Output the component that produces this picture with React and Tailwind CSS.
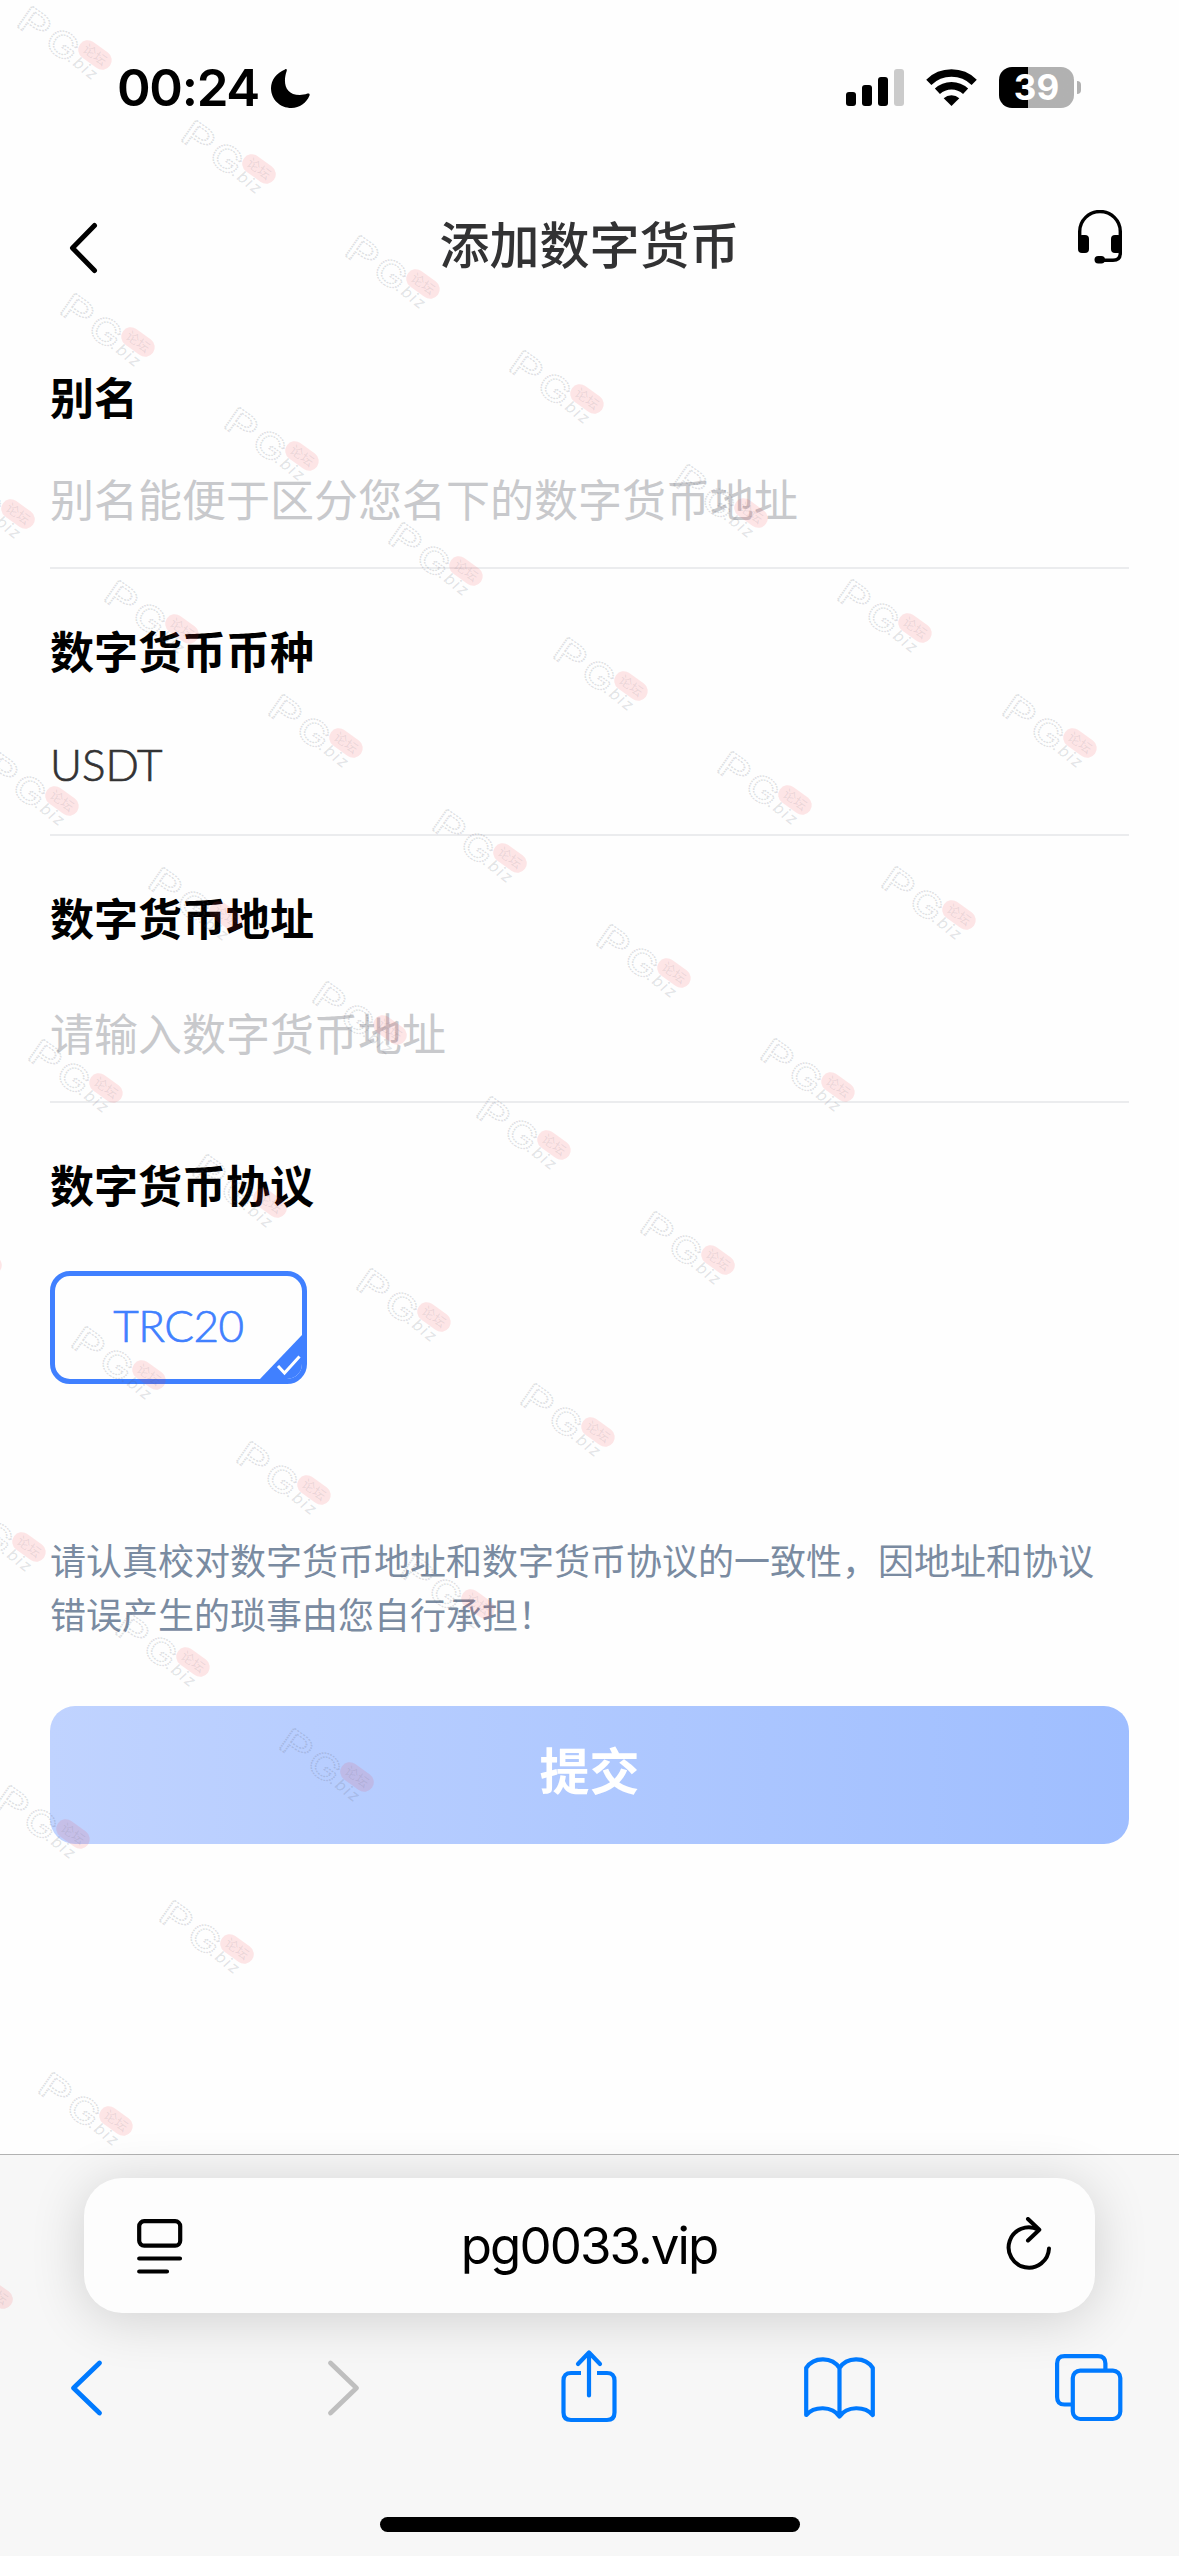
import clsx from 'clsx';

// top-left corner of every watermark stamp, three diagonal families
const stamps = [
  [17, 5], [181, 119], [345, 234], [509, 349], [673, 463], [837, 578], [1002, 693],
  [60, 292], [224, 406], [388, 521], [553, 636], [717, 750], [881, 865],
  [104, 579], [268, 693], [432, 808], [596, 923], [760, 1037],
  [148, 866], [312, 980], [476, 1095], [640, 1210],
  [192, 1153], [356, 1267], [520, 1382],
  [236, 1440], [400, 1554],
  [279, 1727],
  [-60, 464], [-16, 751], [28, 1038], [71, 1325], [115, 1612], [159, 1899],
  [-93, 1210], [-49, 1497], [-5, 1784], [38, 2071],
  [-82, 2244],
];

function Watermark() {
  return (
    <div className="pointer-events-none absolute inset-0 z-20 overflow-hidden">
      {stamps.map(([left, top]) => (
        <svg
          key={`${left}-${top}`}
          className="absolute h-[90px] w-[110px] overflow-visible font-['Inter']"
          style={{ left, top }}
          viewBox="1 2 110 90"
          fill="none"
        >
          <g
            transform="translate(0 23) rotate(35)"
            stroke="#5a5f70"
            strokeOpacity="0.2"
            strokeWidth="1.4"
            strokeDasharray="1.6 0.9"
            fontSize="35"
            fontWeight="500"
          >
            <text x="-2" y="0" textLength="32" lengthAdjust="spacingAndGlyphs">P</text>
            <text x="33" y="1" textLength="32" lengthAdjust="spacingAndGlyphs">G</text>
          </g>
          <text transform="translate(51 58) rotate(38)" fontSize="16" fontStyle="italic" fill="#5a5f70" fillOpacity="0.18" letterSpacing="1.600">.biz</text>
          <g transform="translate(79 52) rotate(36)">
            <rect x="-18.5" y="-9.5" width="37" height="19" rx="9.5" fill="#f5323c" fillOpacity="0.12" />
            <text x="0" y="4.5" textAnchor="middle" fontSize="13" fill="#5a5f70" fillOpacity="0.12" className="font-['Noto_Sans_CJK_SC']">论坛</text>
          </g>
        </svg>
      ))}
    </div>
  );
}

function StatusBar() {
  return (
    <div className="flex h-[176px] items-start pl-[117px] pr-[98px] pt-[67px]">
      <span className="w-[154px] whitespace-nowrap font-['Inter'] text-[51px] font-semibold leading-[42px] tracking-[-1.3px] text-black">00:24</span>
      <svg className="mt-[2px] h-[39px] w-[39px]" viewBox="0 0 39 39">
        <path d="M14 0.4c1.4-.8 2.2.2 1.6 1.8-4 11.5-1.200 23.800 13.200 23.800 2.600 0 5-.300 7.700-1.400 1.500-.600 2.600.300 2 1.900C35.500 34 28.500 39 20.500 39 9 39 0 30.500 0 19 0 11 5.600 3.600 14 .4z" fill="#000" />
      </svg>
      <svg className="ml-auto mt-[2px] h-[38px] w-[58px]" viewBox="0 0 58 38">
        <rect x="0" y="23" width="10" height="14" rx="3" />
        <rect x="16" y="16" width="10" height="21" rx="3" />
        <rect x="32" y="8" width="10" height="29" rx="3" />
        <rect x="48" y="0" width="10" height="37" rx="3" fill="#cbcbcb" />
      </svg>
      <svg className="ml-[22px] mt-[2px] h-[38px] w-[51px]" viewBox="0 0 51 38" fill="none" stroke="#000" strokeWidth="7.400">
        <path d="M2.800 13.300a32.500 32.500 0 0 1 45.400 0" />
        <path d="M11.400 22.300a20.500 20.500 0 0 1 28.200 0" />
        <path d="M25.500 37 17.700 29.200a11.500 11.500 0 0 1 15.600 0z" fill="#000" stroke="none" />
      </svg>
      <div className="ml-[22px] flex items-center">
        <div className="flex h-[41px] w-[75px] items-center justify-center rounded-[13px] bg-linear-to-r from-black from-[39%] to-[#b1b1b1] to-[39%] font-['Inter'] text-[35px] font-bold leading-none text-white">39</div>
        <div className="ml-[3px] h-[13px] w-[4px] rounded-r-full bg-[#b1b1b1]" />
      </div>
    </div>
  );
}

function Header() {
  return (
    <header className="flex h-[140px] items-start justify-between px-[57px]">
      <svg className="mt-[46px] h-[52px] w-[44px]" viewBox="0 0 44 52" fill="none" stroke="#000" strokeWidth="5" strokeLinecap="round" strokeLinejoin="round">
        <path d="M37.500 3.500 15.500 26l22 22.500" />
      </svg>
      <h1 className="mt-[30px] text-[50px] font-medium leading-[72px] text-[#323233]">添加数字货币</h1>
      <svg className="mt-[34px] h-[54px] w-[44px]" viewBox="0 0 44 54" fill="none">
        <path d="M1.700 30V21.500a20.300 20 0 0 1 40.600 0V43q0 7.300-7.300 7.300H23" stroke="#000" strokeWidth="3.400" />
        <rect x="0" y="25" width="11" height="18" rx="4" fill="#000" />
        <rect x="33" y="25" width="11" height="18" rx="4" fill="#000" />
        <rect x="16.500" y="46" width="10.500" height="7.500" rx="3.700" fill="#000" />
      </svg>
    </header>
  );
}

function Field({ label, children, className }) {
  return (
    <div className={clsx('flex flex-col border-b-2 border-[#ebecee]', className)}>
      <label className="text-[44px] font-bold leading-[64px] text-black">{label}</label>
      {children}
    </div>
  );
}

function BrowserBar() {
  return (
    <footer className="flex h-[402px] flex-col border-t border-[#b2b2b2] bg-[#f7f7f7]">
      <div className="mx-[84px] mt-[23px] flex h-[135px] shrink-0 items-center justify-between rounded-[38px] bg-[#fdfdfd] pl-[53px] pr-[43px] shadow-[0_6px_54px_rgba(0,0,0,0.16)]">
        <svg className="h-[56px] w-[46px]" viewBox="0 0 46 56" fill="none" stroke="#000" strokeWidth="4.200" strokeLinecap="round">
          <rect x="2.200" y="3.200" width="41" height="24.500" rx="5" />
          <path d="M2.200 40.500H43M2.200 53.500H30" />
        </svg>
        <span className="-ml-[11px] font-['Inter'] text-[51px] leading-none tracking-[-1.900px] text-black">pg0033.vip</span>
        <svg className="h-[58px] w-[46px]" viewBox="0 0 46 58" fill="none" stroke="#000" strokeWidth="4" strokeLinecap="round" strokeLinejoin="round">
          <path d="M43 31.500A20.200 20.200 0 1 1 32 12.500" />
          <path d="M22 2 33.300 12.700 22 23.500" />
        </svg>
      </div>
      <div className="mt-[34px] flex h-[80px] items-start pl-[68px] text-[#007aff]">
        <svg className="mt-[12px] h-[58px] w-[36px]" viewBox="0 0 36 58" fill="none" stroke="currentColor" strokeWidth="4.800" strokeLinecap="round" strokeLinejoin="round">
          <path d="M31.500 4 5.500 29l26 25" />
        </svg>
        <svg className="ml-[222px] mt-[12px] h-[58px] w-[36px] text-[#bfbfbf]" viewBox="0 0 36 58" fill="none" stroke="currentColor" strokeWidth="4.800" strokeLinecap="round" strokeLinejoin="round">
          <path d="m4.500 4 26 25-26 25" />
        </svg>
        <svg className="ml-[197px] mt-[2px] h-[76px] w-[60px]" viewBox="0 0 60 76" fill="none" stroke="currentColor" strokeWidth="4.200" strokeLinecap="round" strokeLinejoin="round">
          <path d="M22 24H12q-7.500 0-7.500 7.500V63.500q0 7.500 7.500 7.500h36q7.500 0 7.500-7.500V31.500Q55.500 24 48 24H38" strokeLinecap="butt" />
          <path d="M30 46.500V4M19 15 30 3.500 41 15" />
        </svg>
        <svg className="ml-[183px] mt-[8px] h-[66px] w-[75px]" viewBox="0 0 75 66" fill="none" stroke="currentColor" strokeWidth="4.200" strokeLinecap="round" strokeLinejoin="round">
          <path d="M37.500 13C30.500 2 12 1 4.200 13v47C12 51 30 50.500 37.500 61.500 45 50.500 63 51 70.800 60V13C63 1 44.500 2 37.500 13zM37.500 13V61" />
        </svg>
        <svg className="ml-[176px] mt-[6px] h-[70px] w-[71px]" viewBox="0 0 71 70" fill="none" stroke="currentColor" strokeWidth="4.200">
          <path d="M18 51.500H11.500q-7.400 0-7.400-7.400V10.500Q4.100 3.100 11.500 3.100H45q7.400 0 7.400 7.400V17" />
          <rect x="19.800" y="17.600" width="47.500" height="48.400" rx="7.400" />
        </svg>
      </div>
      <div className="mx-auto mt-[90px] h-[15px] w-[420px] rounded-full bg-black" />
    </footer>
  );
}

export default function App() {
  return (
    <div className="relative flex h-[2556px] w-[1179px] flex-col overflow-hidden bg-[#fefefe] font-['Noto_Sans_CJK_SC',sans-serif]">
      <StatusBar />
      <Header />

      <main className="flex flex-1 flex-col px-[50px] pt-[48px]">
        <Field label="别名" className="h-[205px]">
          <input
            className="mt-[38px] h-[64px] text-[44px] text-[#323233] placeholder:text-[#c8c9cc]"
            placeholder="别名能便于区分您名下的数字货币地址"
          />
        </Field>
        <Field label="数字货币币种" className="h-[267px] pt-[49px]">
          <span className="mt-[50px] font-['Lato'] text-[44px] font-light leading-[64px] text-[#323233] [-webkit-text-stroke:0.7px]">USDT</span>
        </Field>
        <Field label="数字货币地址" className="h-[267px] pt-[49px]">
          <input
            className="mt-[51px] h-[64px] text-[44px] text-[#323233] placeholder:text-[#c8c9cc]"
            placeholder="请输入数字货币地址"
          />
        </Field>

        <h2 className="mt-[49px] text-[44px] font-bold leading-[64px] text-black">数字货币协议</h2>
        <button className="relative mt-[55px] h-[113px] w-[257px] overflow-hidden rounded-[20px] border-[5px] border-[#4080ff] pb-[6px] font-['Lato'] text-[44px] font-light leading-none tracking-[-0.500px] text-[#4080ff]">
          <span className="[-webkit-text-stroke:0.7px]">TRC20</span>
          <svg className="absolute -bottom-px -right-px h-[46px] w-[44px]" viewBox="0 0 44 46" fill="none">
            <path d="M44 0V46H0z" fill="#4080ff" />
            <path d="m19 32 6.500 7 15-16.500" stroke="#fff" strokeWidth="3" />
          </svg>
        </button>

        <p className="mt-[148px] text-[36px] leading-[54px] text-[#7a8ba1]">
          请认真校对数字货币地址和数字货币协议的一致性，因地址和协议错误产生的琐事由您自行承担！
        </p>
        <button className="mt-[66px] h-[138px] rounded-[25px] bg-linear-to-r from-[#c0d3ff] to-[#9fbeff] pb-[14px] text-[50px] font-bold text-white">提交</button>
      </main>

      <BrowserBar />
      <Watermark />
    </div>
  );
}
